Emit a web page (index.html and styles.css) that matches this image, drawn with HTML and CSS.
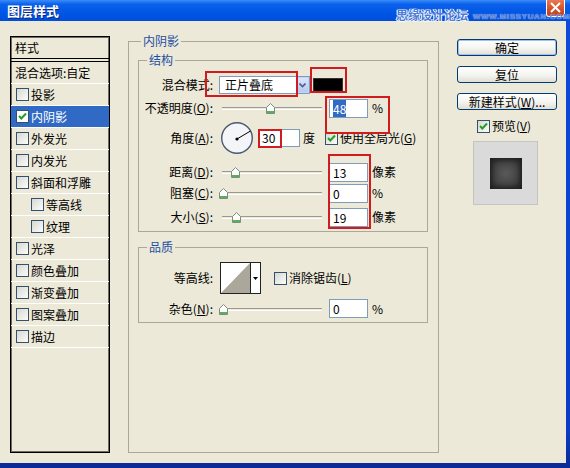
FILE: index.html
```html
<html>
    <head>
        <title>图层样式</title>
        <link rel="stylesheet" href="styles.css">
    </head>
    <body>
        <div class="window">
            <div class="titlebar">
                <span class="title">图层样式</span>
                <span class="close">
                    <svg width="19" height="17" viewBox="0 0 19 17"><path d="M5 3 L14 12 M14 3 L5 12" stroke="#fff" stroke-width="2"/></svg>
                </span>
            </div>
            <div class="watermark"><span class="wm-cn">思缘设计论坛</span><span class="wm-en">WWW.MISSYUAN.COM</span></div>

            <div class="client">
                <div class="styles-list">
                    <div class="list-head">样式</div>
                    <ul class="list">
                        <li>混合选项:自定</li>
                        <li><span class="cb"></span>投影</li>
                        <li class="selected"><span class="cb"><svg width="11" height="11" viewBox="0 0 11 11"><path d="M2 5 L4.3 7.5 L9 2.5" fill="none" stroke="#21a121" stroke-width="2"/></svg></span>内阴影</li>
                        <li><span class="cb"></span>外发光</li>
                        <li><span class="cb"></span>内发光</li>
                        <li><span class="cb"></span>斜面和浮雕</li>
                        <li class="sub"><span class="cb"></span>等高线</li>
                        <li class="sub"><span class="cb"></span>纹理</li>
                        <li><span class="cb"></span>光泽</li>
                        <li><span class="cb"></span>颜色叠加</li>
                        <li><span class="cb"></span>渐变叠加</li>
                        <li><span class="cb"></span>图案叠加</li>
                        <li><span class="cb"></span>描边</li>
                    </ul>
                </div>

                <fieldset class="panel">
                    <legend>内阴影</legend>

                    <fieldset class="group structure">
                        <legend>结构</legend>
                        <div class="row r-mode">
                            <span class="lbl">混合模式:</span>
                            <span class="combo">
                                <span class="combo-text">正片叠底</span>
                                <span class="combo-btn"><svg width="7" height="5" viewBox="0 0 7 5"><path d="M0.5 0.5 L3.5 3.5 L6.5 0.5" fill="none" stroke="#4d6185" stroke-width="1.6"/></svg></span>
                            </span>
                            <span class="swatch"></span>
                        </div>
                        <div class="row r-opacity">
                            <span class="lbl">不透明度(<u>O</u>):</span>
                            <span class="slider"><svg class="thumb" style="left:47px" width="9" height="11" viewBox="0 0 9 11"><path d="M0.5 4.5 L4.5 0.5 L8.5 4.5 L8.5 10.5 L0.5 10.5 Z" fill="#fff" stroke="#7d8d7d"/><rect x="1" y="8" width="7" height="2" fill="#58b058"/></svg></span>
                            <span class="num"><span class="sel">48</span></span>
                            <span class="unit">%</span>
                        </div>
                        <div class="row r-angle">
                            <span class="lbl">角度(<u>A</u>):</span>
                            <svg class="dial" width="34" height="32" viewBox="0 0 34 32">
                                <circle cx="17" cy="16" r="15.3" fill="#f3f5f9" stroke="#4a5870" stroke-width="1.4"/>
                                <line x1="17" y1="17" x2="30.5" y2="9" stroke="#000" stroke-width="1"/>
                                <circle cx="17" cy="17" r="1.6" fill="#000"/>
                            </svg>
                            <span class="num angle">30</span>
                            <span class="unit">度</span>
                            <span class="check global"><span class="cb"><svg width="11" height="11" viewBox="0 0 11 11"><path d="M2 5 L4.3 7.5 L9 2.5" fill="none" stroke="#21a121" stroke-width="2"/></svg></span>使用全局光(<u>G</u>)</span>
                        </div>
                        <div class="row r-distance">
                            <span class="lbl">距离(<u>D</u>):</span>
                            <span class="slider"><svg class="thumb" style="left:12px" width="9" height="11" viewBox="0 0 9 11"><path d="M0.5 4.5 L4.5 0.5 L8.5 4.5 L8.5 10.5 L0.5 10.5 Z" fill="#fff" stroke="#7d8d7d"/><rect x="1" y="8" width="7" height="2" fill="#58b058"/></svg></span>
                            <span class="num">13</span>
                            <span class="unit">像素</span>
                        </div>
                        <div class="row r-choke">
                            <span class="lbl">阻塞(<u>C</u>):</span>
                            <span class="slider"><svg class="thumb" style="left:0px" width="9" height="11" viewBox="0 0 9 11"><path d="M0.5 4.5 L4.5 0.5 L8.5 4.5 L8.5 10.5 L0.5 10.5 Z" fill="#fff" stroke="#7d8d7d"/><rect x="1" y="8" width="7" height="2" fill="#58b058"/></svg></span>
                            <span class="num">0</span>
                            <span class="unit">%</span>
                        </div>
                        <div class="row r-size">
                            <span class="lbl">大小(<u>S</u>):</span>
                            <span class="slider"><svg class="thumb" style="left:13px" width="9" height="11" viewBox="0 0 9 11"><path d="M0.5 4.5 L4.5 0.5 L8.5 4.5 L8.5 10.5 L0.5 10.5 Z" fill="#fff" stroke="#7d8d7d"/><rect x="1" y="8" width="7" height="2" fill="#58b058"/></svg></span>
                            <span class="num">19</span>
                            <span class="unit">像素</span>
                        </div>
                    </fieldset>

                    <fieldset class="group quality">
                        <legend>品质</legend>
                        <div class="row r-contour">
                            <span class="lbl">等高线:</span>
                            <span class="contour">
                                <svg width="29" height="30" viewBox="0 0 29 30"><rect width="29" height="30" fill="#fff"/><path d="M0 30 L29 0 L29 30 Z" fill="#aba79b"/></svg>
                                <span class="contour-btn"><svg width="5" height="3" viewBox="0 0 5 3"><path d="M0 0 H5 L2.5 3 Z" fill="#000"/></svg></span>
                            </span>
                            <span class="check antialias"><span class="cb"></span>消除锯齿(<u>L</u>)</span>
                        </div>
                        <div class="row r-noise">
                            <span class="lbl">杂色(<u>N</u>):</span>
                            <span class="slider"><svg class="thumb" style="left:0px" width="9" height="11" viewBox="0 0 9 11"><path d="M0.5 4.5 L4.5 0.5 L8.5 4.5 L8.5 10.5 L0.5 10.5 Z" fill="#fff" stroke="#7d8d7d"/><rect x="1" y="8" width="7" height="2" fill="#58b058"/></svg></span>
                            <span class="num">0</span>
                            <span class="unit">%</span>
                        </div>
                    </fieldset>
                </fieldset>

                <div class="side">
                    <span class="btn default">确定</span>
                    <span class="btn">复位</span>
                    <span class="btn">新建样式(<u>W</u>)...</span>
                    <span class="check preview-check"><span class="cb"><svg width="11" height="11" viewBox="0 0 11 11"><path d="M2 5 L4.3 7.5 L9 2.5" fill="none" stroke="#21a121" stroke-width="2"/></svg></span>预览(<u>V</u>)</span>
                    <div class="preview"><div class="preview-square"></div></div>
                </div>
            </div>

            <div class="mark mark-mode"></div>
            <div class="mark mark-color"></div>
            <div class="mark mark-opacity"></div>
            <div class="mark mark-angle"></div>
            <div class="mark mark-values"></div>
        </div>
    </body>
</html>
```

FILE: styles.css
```css
body
{
    margin: 0;
    font-family: "Noto Sans CJK SC", "DejaVu Sans", sans-serif;
    font-size: 12px;
    line-height: 14px;
    color: #000;
}

u
{
    text-decoration: underline;
}

.window
{
    position: relative;
    width: 570px;
    height: 468px;
    display: flex;
    flex-direction: column;
    overflow: hidden;
    background: linear-gradient(#0c4bd9, #0a3cc6 92%, #0a2a96);
}

.titlebar
{
    height: 21px;
    flex: none;
    display: flex;
    align-items: center;
    justify-content: space-between;
    padding-left: 7px;
    background: linear-gradient(#3a8cf8 0%, #0b61ea 20%, #0056e6 60%, #004ddb 100%);
}

.title
{
    color: #fff;
    font-weight: bold;
    font-size: 13px;
    line-height: 15px;
    text-shadow: 1px 1px 0 #0a2680;
}

.close
{
    align-self: flex-start;
    width: 19px;
    height: 17px;
    margin-right: 5px;
    box-sizing: border-box;
    border: 1px solid #fff;
    border-top: none;
    border-radius: 0 0 3px 3px;
    background: linear-gradient(#e87a55, #d9542c 50%, #c13d18);
}

.close svg
{
    display: block;
    margin-left: -1px;
}

.watermark
{
    position: absolute;
    left: 396px;
    top: 8px;
    display: flex;
    align-items: flex-end;
    white-space: nowrap;
}

.wm-cn
{
    font-size: 12px;
    line-height: 13px;
    font-weight: bold;
    color: #4a7bd6;
    text-shadow: 0 0 1px #fff, 1px 0 0 #fff, -1px 0 0 #fff, 0 1px 0 #fff;
}

.wm-en
{
    margin-left: 5px;
    font-family: "Liberation Sans", sans-serif;
    font-size: 8px;
    line-height: 9px;
    font-weight: bold;
    letter-spacing: 0.6px;
    color: #4a7bd6;
    text-shadow: 0 0 1px #fff;
}

.client
{
    flex: 1;
    margin: 0 4px 5px 0;
    padding: 15px 0 0 10px;
    display: flex;
    align-items: flex-start;
    background: #ece9d8;
}

/* left list of effects */

.styles-list
{
    width: 100px;
    height: 417px;
    flex: none;
    box-sizing: border-box;
    border: 1px solid #000;
    box-shadow: inset 0 0 0 1px #6e6c63;
}

.list-head
{
    height: 21px;
    line-height: 21px;
    padding-left: 4px;
    border-bottom: 1px solid #000;
}

.list
{
    margin: 2px 0 0 0;
    padding: 0;
    list-style: none;
    border-top: 1px solid #000;
}

.list li
{
    height: 21px;
    display: flex;
    align-items: center;
    padding-left: 5px;
    border-bottom: 1px solid #fff;
}

.list li:first-child
{
    padding-left: 4px;
}

.list li.sub
{
    padding-left: 20px;
}

.list li.selected
{
    background: #316ac5;
    color: #fff;
}

.cb
{
    width: 13px;
    height: 13px;
    flex: none;
    box-sizing: border-box;
    border: 1px solid #34506e;
    background: linear-gradient(135deg, #d8d8d2, #fbfbf9);
    margin-right: 2px;
}

.cb svg
{
    display: block;
}

.list li.selected .cb
{
    background: #fff;
}

.check
{
    display: flex;
    align-items: center;
}

/* main panel */

fieldset
{
    margin: 0;
    min-width: 0;
    box-sizing: border-box;
    border: 1px solid #aca899;
}

legend
{
    padding: 0 2px;
    line-height: 14px;
    color: #1e4fa3;
}

.panel
{
    width: 311px;
    height: 419px;
    flex: none;
    margin: -2px 0 0 18px;
    padding: 0 10px 0 9px;
}

.panel > legend
{
    margin-left: 3px;
}

.group
{
    padding: 8px 0 4px 0;
}

.group > legend
{
    margin-left: 8px;
}

.structure
{
    margin-top: 5px;
}

.quality
{
    margin-top: 8px;
}

.row
{
    display: flex;
    align-items: center;
    height: 20px;
}

.lbl
{
    width: 74px;
    flex: none;
    text-align: right;
    white-space: nowrap;
}

.r-opacity { margin-top: 3px; }
.r-angle { margin-top: 4px; height: 32px; }
.r-distance { margin-top: 8px; }
.r-choke { margin-top: 1px; }
.r-size { margin-top: 4px; }
.r-contour { height: 32px; }
.r-noise { margin-top: 5px; height: 19px; }

.combo
{
    display: flex;
    width: 91px;
    height: 18px;
    margin-left: 6px;
    box-sizing: border-box;
    border: 1px solid #7f9db9;
    background: #fff;
}

.combo-text
{
    flex: 1;
    padding-left: 5px;
    line-height: 16px;
}

.combo-btn
{
    width: 13px;
    display: flex;
    align-items: center;
    justify-content: center;
    box-sizing: border-box;
    border: 1px solid #c3d3fd;
    background: linear-gradient(#dbe5fb, #b6c9f3);
}

.swatch
{
    width: 30px;
    height: 14px;
    margin-left: 3px;
    box-sizing: border-box;
    border: 1px solid #333;
    background: #000;
}

.slider
{
    position: relative;
    width: 104px;
    height: 20px;
    flex: none;
    margin-left: 6px;
}

.slider::before
{
    content: "";
    position: absolute;
    left: 3px;
    right: 1px;
    top: 9px;
    height: 1px;
    border-top: 1px solid #9b9a92;
    border-bottom: 1px solid #fff;
}

.thumb
{
    position: absolute;
    top: 5px;
}

.num
{
    width: 39px;
    height: 19px;
    flex: none;
    margin-left: 6px;
    box-sizing: border-box;
    border: 1px solid #7f9db9;
    background: #fff;
    padding-left: 3px;
    line-height: 17px;
}

.sel
{
    background: #316ac5;
    color: #fff;
}

.unit
{
    margin-left: 4px;
}

.dial
{
    margin-left: 7px;
    flex: none;
}

.num.angle
{
    width: 42px;
    height: 18px;
    margin-left: 4px;
    line-height: 16px;
}

.r-angle .unit
{
    margin-left: 3px;
}

.global
{
    margin-left: 10px;
}

.contour
{
    display: flex;
    width: 41px;
    height: 32px;
    margin-left: 7px;
    box-sizing: border-box;
    border: 1px solid #222;
    background: #fff;
}

.contour svg
{
    display: block;
}

.contour-btn
{
    flex: 1;
    display: flex;
    align-items: center;
    justify-content: center;
    border-left: 1px solid #222;
}

.antialias
{
    margin-left: 13px;
}

/* right column */

.side
{
    width: 100px;
    flex: none;
    margin-left: 18px;
    padding-top: 3px;
    display: flex;
    flex-direction: column;
}

.btn
{
    height: 17px;
    margin-bottom: 10px;
    box-sizing: border-box;
    border: 1px solid #003c74;
    border-radius: 3px;
    background: linear-gradient(#fff, #f4f4f0 55%, #e1ded3);
    display: flex;
    align-items: center;
    justify-content: center;
    line-height: 14px;
}

.btn.default
{
    box-shadow: inset 0 0 0 1px #a4bff0;
}

.preview-check
{
    height: 14px;
    margin: -1px 0 0 20px;
}

.preview
{
    width: 65px;
    height: 64px;
    margin: 8px 0 0 16px;
    box-sizing: border-box;
    border: 1px solid #c4c4c4;
    background: #dadada;
    display: flex;
    align-items: center;
    justify-content: center;
}

.preview-square
{
    width: 32px;
    height: 31px;
    background: radial-gradient(closest-side, #595959, #444 80%, #3a3a3a);
    box-shadow: inset 0 0 6px 1px #151515;
}

/* red annotation frames drawn over the screenshot */

.mark
{
    position: absolute;
    box-sizing: border-box;
    border: 2px solid #d01c1f;
}

.mark-mode { left: 205px; top: 71px; width: 93px; height: 26px; }
.mark-color { left: 310px; top: 67px; width: 37px; height: 26px; }
.mark-opacity { left: 325px; top: 96px; width: 65px; height: 38px; }
.mark-angle { left: 258px; top: 129px; width: 24px; height: 19px; }
.mark-values { left: 328px; top: 154px; width: 43px; height: 75px; }
```
